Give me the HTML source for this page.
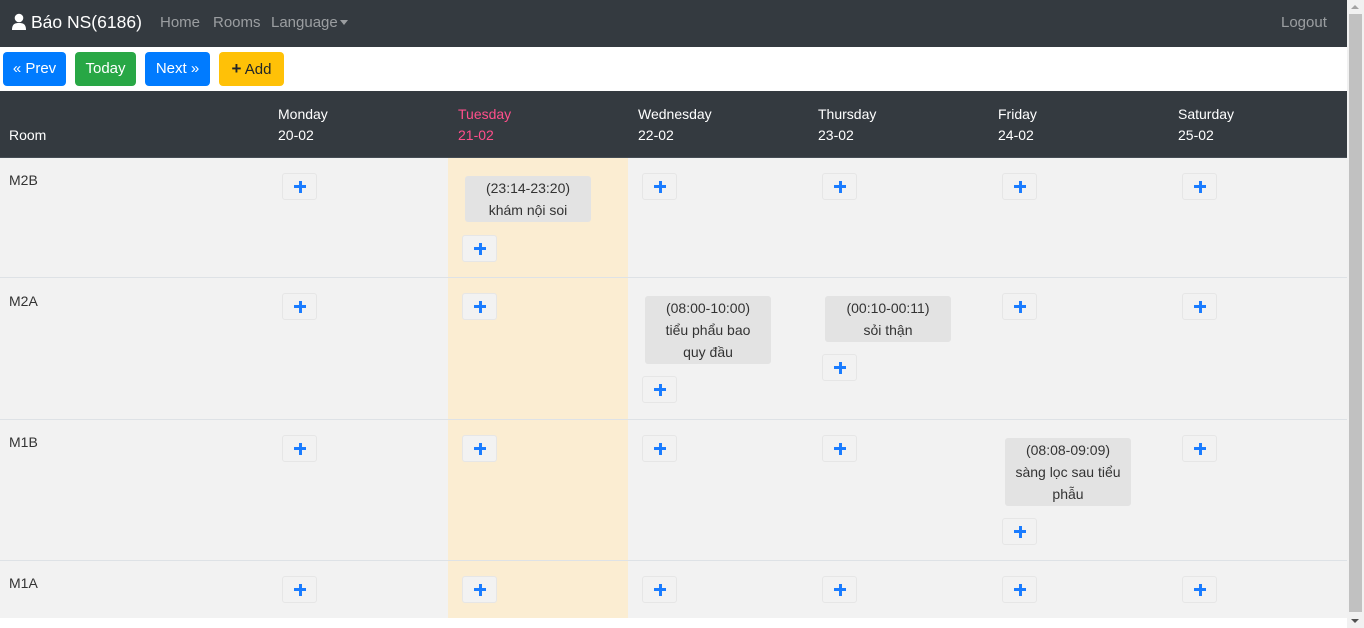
<!DOCTYPE html>
<html><head><meta charset="utf-8"><style>
*{box-sizing:border-box;margin:0;padding:0}
body{width:1364px;height:628px;overflow:hidden;background:#fff;font-family:"Liberation Sans","DejaVu Sans",sans-serif;position:relative;font-size:14px}
.a{position:absolute}
.nav{left:0;top:0;width:1347px;height:47px;background:#343a40}
.nl{color:rgba(255,255,255,.5);font-size:15px;top:14px}
.btn{top:52px;height:34px;border-radius:4px;color:#fff;font-size:15px;text-align:center;line-height:34px}
.th{top:91px;left:0;width:1347px;height:67px;background:#343a40;border-bottom:1px solid #454d55}
.hd{color:#fff;font-size:14px;line-height:21px;top:104px}
.row{left:0;width:1347px;background:#f2f2f2;border-bottom:1px solid #dee2e6}
.tue{left:448px;width:180px;top:158px;height:460px;background:#fbedd2}
.p{width:35px;height:27px;background:#f2f2f2;border:1px solid #e6e6e6;border-radius:3px}
.p:before{content:"";position:absolute;left:11px;top:11px;width:12px;height:3px;background:#1a7cff}
.p:after{content:"";position:absolute;left:15.5px;top:6.5px;width:3px;height:12px;background:#1a7cff}
.ev{width:126px;background:#e3e3e3;border-radius:3px;text-align:center;color:#333;font-size:14px;line-height:22px;padding:1px 0;white-space:nowrap}
.rm{color:#333;font-size:14px;left:9px}
</style></head><body>
<div class="a nav"></div>
<svg class="a" style="left:12px;top:13px" width="14" height="18" viewBox="0 0 14 18"><circle cx="7" cy="5" r="4.3" fill="#fff"/><path d="M0 17 C0 11 3 10 7 10 C11 10 14 11 14 17 Z" fill="#fff"/></svg>
<div class="a" style="left:31px;top:12px;color:#fff;font-size:17.5px">Báo NS(6186)</div>
<div class="a nl" style="left:160px">Home</div>
<div class="a nl" style="left:213px">Rooms</div>
<div class="a nl" style="left:271px">Language</div>
<div class="a" style="left:340px;top:20px;border-left:4px solid transparent;border-right:4px solid transparent;border-top:5px solid rgba(255,255,255,.5)"></div>
<div class="a nl" style="left:1281px">Logout</div>

<div class="a btn" style="left:3px;width:63px;background:#007bff">« Prev</div>
<div class="a btn" style="left:75px;width:61px;background:#28a745">Today</div>
<div class="a btn" style="left:145px;width:65px;background:#007bff">Next »</div>
<div class="a btn" style="left:219px;width:65px;background:#ffc107;color:#212529"><b style="font-size:17px">+</b> Add</div>

<div class="a th"></div>
<div class="a hd" style="left:9px;top:125px">Room</div>
<div class="a hd" style="left:278px">Monday<br>20-02</div>
<div class="a hd" style="left:458px;color:#ff4f8b">Tuesday<br>21-02</div>
<div class="a hd" style="left:638px">Wednesday<br>22-02</div>
<div class="a hd" style="left:818px">Thursday<br>23-02</div>
<div class="a hd" style="left:998px">Friday<br>24-02</div>
<div class="a hd" style="left:1178px">Saturday<br>25-02</div>

<div class="a row" style="top:158px;height:120px"></div>
<div class="a row" style="top:278px;height:142px"></div>
<div class="a row" style="top:420px;height:141px"></div>
<div class="a row" style="top:561px;height:57px;border-bottom:none"></div>
<div class="a tue"></div>
<div class="a" style="left:0;top:277px;width:1347px;height:1px;background:#dee2e6"></div>
<div class="a" style="left:0;top:419px;width:1347px;height:1px;background:#dee2e6"></div>
<div class="a" style="left:0;top:560px;width:1347px;height:1px;background:#dee2e6"></div>

<div class="a rm" style="top:172px">M2B</div>
<div class="a rm" style="top:293px">M2A</div>
<div class="a rm" style="top:434px">M1B</div>
<div class="a rm" style="top:575px">M1A</div>

<div class="a p" style="left:282px;top:173px"></div>
<div class="a ev" style="left:465px;top:176px">(23:14-23:20)<br>khám nội soi</div>
<div class="a p" style="left:462px;top:235px"></div>
<div class="a p" style="left:642px;top:173px"></div>
<div class="a p" style="left:822px;top:173px"></div>
<div class="a p" style="left:1002px;top:173px"></div>
<div class="a p" style="left:1182px;top:173px"></div>

<div class="a p" style="left:282px;top:293px"></div>
<div class="a p" style="left:462px;top:293px"></div>
<div class="a ev" style="left:645px;top:296px">(08:00-10:00)<br>tiểu phẩu bao<br>quy đầu</div>
<div class="a p" style="left:642px;top:376px"></div>
<div class="a ev" style="left:825px;top:296px">(00:10-00:11)<br>sỏi thận</div>
<div class="a p" style="left:822px;top:354px"></div>
<div class="a p" style="left:1002px;top:293px"></div>
<div class="a p" style="left:1182px;top:293px"></div>

<div class="a p" style="left:282px;top:435px"></div>
<div class="a p" style="left:462px;top:435px"></div>
<div class="a p" style="left:642px;top:435px"></div>
<div class="a p" style="left:822px;top:435px"></div>
<div class="a ev" style="left:1005px;top:438px">(08:08-09:09)<br>sàng lọc sau tiểu<br>phẫu</div>
<div class="a p" style="left:1002px;top:518px"></div>
<div class="a p" style="left:1182px;top:435px"></div>

<div class="a p" style="left:282px;top:576px"></div>
<div class="a p" style="left:462px;top:576px"></div>
<div class="a p" style="left:642px;top:576px"></div>
<div class="a p" style="left:822px;top:576px"></div>
<div class="a p" style="left:1002px;top:576px"></div>
<div class="a p" style="left:1182px;top:576px"></div>

<div class="a" style="left:1347px;top:0;width:17px;height:628px;background:#f1f1f1"></div>
<div class="a" style="left:1349px;top:14px;width:13px;height:598px;background:#c1c1c1"></div>
<div class="a" style="left:1351px;top:5px;border-left:4px solid transparent;border-right:4px solid transparent;border-bottom:4px solid #a3a3a3"></div>
<div class="a" style="left:1351px;top:619px;border-left:4px solid transparent;border-right:4px solid transparent;border-top:4px solid #505050"></div>
</body></html>
